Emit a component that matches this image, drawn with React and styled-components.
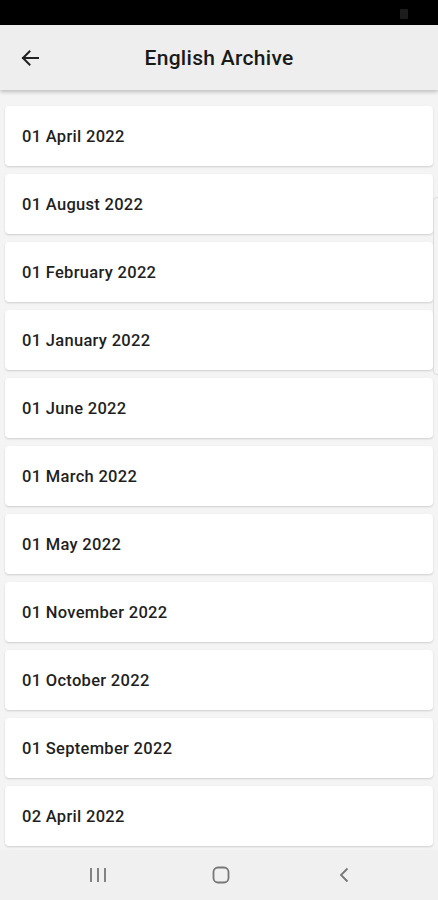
import React from "react";
import styled, { createGlobalStyle } from "styled-components";

const Global = createGlobalStyle`
  html, body { margin: 0; padding: 0; }
  body { font-family: Roboto, "Noto Sans", sans-serif; background: #f4f4f4; }
`;

const Screen = styled.div`
  width: 438px;
  height: 900px;
  display: flex;
  flex-direction: column;
  background: #f4f4f4;
  overflow: hidden;
  position: relative;
`;

const StatusBar = styled.div`
  height: 25px;
  background: #000;
  display: flex;
  justify-content: flex-end;
  align-items: center;
  padding-right: 30px;
  flex-shrink: 0;
`;

const StatusDot = styled.div`
  width: 8px;
  height: 10px;
  border-radius: 1px;
  background: #1c1c1c;
  margin-top: 3px;
`;

const Header = styled.header`
  height: 65px;
  background: #eeeeee;
  display: flex;
  align-items: center;
  position: relative;
  z-index: 2;
  box-shadow: 0 2px 4px rgba(0, 0, 0, 0.22);
  flex-shrink: 0;
`;

const BackButton = styled.div`
  width: 60px;
  height: 65px;
  display: flex;
  align-items: center;
  justify-content: center;
  color: #222;
`;

const Title = styled.h1`
  flex: 1;
  margin: 0 60px 0 0;
  text-align: center;
  font-size: 21px;
  font-weight: 500;
  color: #1a1a1a;
  letter-spacing: 0.3px;
  padding-top: 1px;
`;

const List = styled.div`
  flex: 1;
  overflow: hidden;
  padding: 16px 5px 0 5px;
  display: flex;
  flex-direction: column;
  gap: 8px;
`;

const Card = styled.div`
  height: 60px;
  flex-shrink: 0;
  background: #ffffff;
  border-radius: 4px;
  box-shadow: 0 1px 2px rgba(0, 0, 0, 0.16);
  display: flex;
  align-items: center;
  padding-left: 17px;
  font-size: 16.5px;
  font-weight: 500;
  color: #1f1f1f;
  letter-spacing: 0.3px;
`;

const Ghost = styled.div`
  position: absolute;
  left: 433px;
  top: 197px;
  width: 8px;
  height: 176px;
  border: 1px solid #dcdcdc;
  border-radius: 4px;
  pointer-events: none;
`;

const NavBar = styled.nav`
  height: 50px;
  background: #f0f0f0;
  display: flex;
  align-items: center;
  justify-content: center;
  gap: 87px;
  padding-left: 4px;
  flex-shrink: 0;
`;

const NavIcon = styled.div`
  width: 36px;
  height: 30px;
  display: flex;
  align-items: center;
  justify-content: center;
`;

const items = [
  "01 April 2022",
  "01 August 2022",
  "01 February 2022",
  "01 January 2022",
  "01 June 2022",
  "01 March 2022",
  "01 May 2022",
  "01 November 2022",
  "01 October 2022",
  "01 September 2022",
  "02 April 2022",
];

export default function App() {
  return (
    <>
      <Global />
      <Screen>
        <StatusBar>
          <StatusDot />
        </StatusBar>
        <Header>
          <BackButton>
            <svg width="18" height="16" viewBox="0 0 18 16" fill="none">
              <path
                d="M17 8H2M8.5 1.5L2 8l6.5 6.5"
                stroke="#222"
                strokeWidth="2"
                strokeLinecap="square"
              />
            </svg>
          </BackButton>
          <Title>English Archive</Title>
        </Header>
        <List>
          {items.map((t) => (
            <Card key={t}>{t}</Card>
          ))}
        </List>
        <Ghost />
        <NavBar>
          <NavIcon>
            <svg width="18" height="16" viewBox="0 0 18 16">
              <path d="M2 1v14M9 1v14M16 1v14" stroke="#777" strokeWidth="1.8" />
            </svg>
          </NavIcon>
          <NavIcon>
            <svg width="18" height="18" viewBox="0 0 18 18">
              <rect x="1.5" y="1.5" width="15" height="15" rx="4.5" fill="none" stroke="#777" strokeWidth="1.8" />
            </svg>
          </NavIcon>
          <NavIcon>
            <svg width="12" height="16" viewBox="0 0 12 16">
              <path d="M9.5 1.5L3 8l6.5 6.5" fill="none" stroke="#777" strokeWidth="1.8" />
            </svg>
          </NavIcon>
        </NavBar>
      </Screen>
    </>
  );
}
